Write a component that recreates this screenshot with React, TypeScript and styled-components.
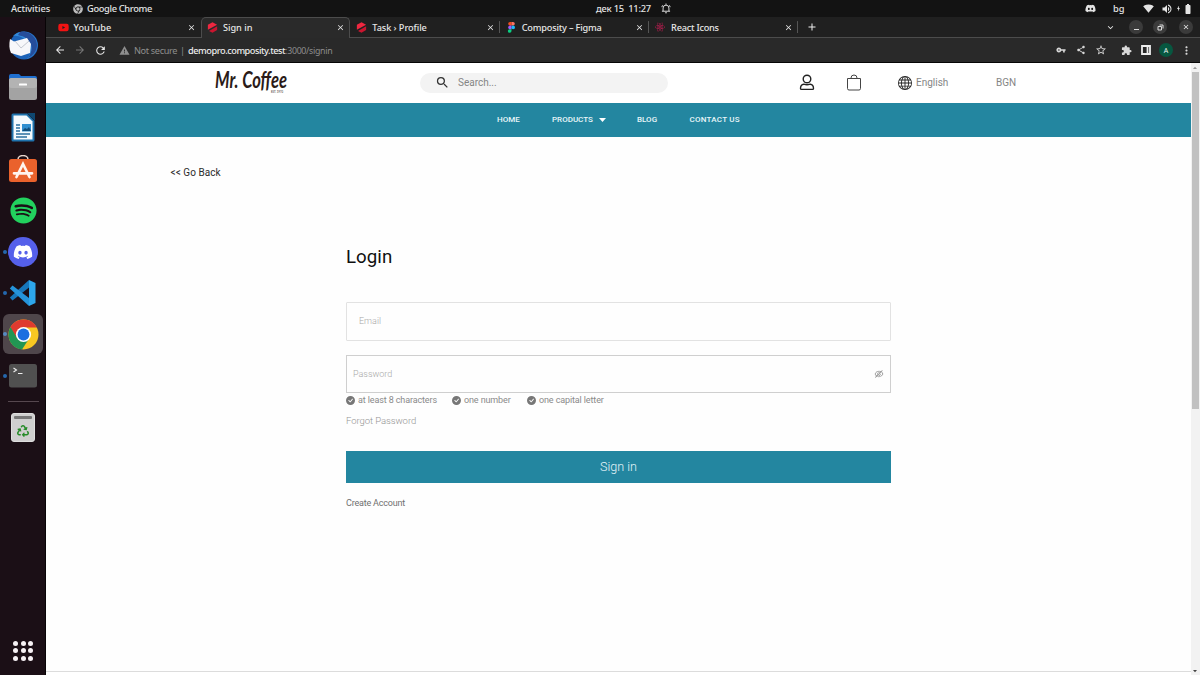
import React from "react";
import styled, { createGlobalStyle } from "styled-components";
import { FaDiscord, FaSpotify, FaYoutube, FaReact, FaRecycle, FaChrome } from "react-icons/fa";
import { AiOutlineEyeInvisible } from "react-icons/ai";
import { BsCheckCircleFill, BsGlobe } from "react-icons/bs";
import {
  MdArrowBack, MdArrowForward, MdRefresh, MdWarning, MdVpnKey, MdShare, MdStarBorder,
  MdExtension, MdMoreVert, MdClose, MdAdd, MdKeyboardArrowDown, MdVolumeUp,
  MdSignalWifi4Bar, MdBatteryFull, MdSearch, MdBolt,
} from "react-icons/md";

const TEAL = "#2386a0";

const Global = createGlobalStyle`
  * { box-sizing: border-box; }
  body { margin: 0; background: #fff; overflow: hidden; }
  svg { display: block; flex: none; }
`;

const Desktop = styled.div`
  width: 1200px;
  height: 675px;
  display: grid;
  grid-template: 17px 658px / 46px 1154px;
  font-family: "Noto Sans", "Open Sans", sans-serif;
  overflow: hidden;
`;

const TopBar = styled.header`
  grid-column: 1 / 3;
  display: grid;
  grid-template-columns: 540px 1fr 115px;
  background: #131313;
  color: #e4e4e4;
  font-size: 9.3px;
  font-weight: 500;
`;

const BarGroup = styled.div<{ $pad?: number }>`
  display: flex;
  align-items: center;
  height: 17px;
  padding-left: ${(p) => p.$pad ?? 0}px;
  white-space: pre;
`;

const Label = styled.span<{ $width?: number; $spacing?: number }>`
  flex: none;
  width: ${(p) => (p.$width ? `${p.$width}px` : "auto")};
  letter-spacing: ${(p) => p.$spacing ?? 0}px;
  white-space: pre;
`;

const Spacer = styled.span<{ $size: number }>`
  flex: none;
  width: ${(p) => p.$size}px;
`;

const Dock = styled.aside`
  background: #1b0f16;
  border-right: 1px solid #080406;
  padding-top: 7.5px;
  display: flex;
  flex-direction: column;
`;

const DockItem = styled.div<{ $running?: boolean }>`
  height: 41.3px;
  flex: none;
  display: flex;
  align-items: center;
  &::before {
    content: "";
    width: 4px;
    height: 4px;
    margin-left: 3px;
    border-radius: 50%;
    flex: none;
    background: ${(p) => (p.$running ? "#2467ad" : "transparent")};
  }
`;

const Tile = styled.div<{ $active?: boolean }>`
  width: 40px;
  height: 40px;
  margin-left: -4px;
  border-radius: 6px;
  display: flex;
  align-items: center;
  justify-content: center;
  background: ${(p) => (p.$active ? "rgba(255,255,255,.23)" : "transparent")};
`;

const DockRule = styled.hr`
  width: 31px;
  height: 1px;
  margin: 5px 0 5px 8px;
  border: 0;
  background: #56484f;
`;

const AppGrid = styled.div`
  margin: auto 0 14px 13px;
  display: grid;
  grid-template-columns: repeat(3, 5px);
  gap: 2.6px;
`;

const GridDot = styled.i`
  height: 5px;
  border-radius: 50%;
  background: #f6f1f4;
`;

const Window = styled.section`
  display: grid;
  grid-template-rows: 21px 25px 612px;
`;

const TabStrip = styled.div`
  display: flex;
  background: #202020;
  border-bottom: 1px solid #4c4c4c;
  padding-left: 5.5px;
`;

const Tab = styled.div<{ $active?: boolean; $divided?: boolean }>`
  width: 149.4px;
  height: ${(p) => (p.$active ? 21 : 20)}px;
  flex: none;
  display: grid;
  grid-template-columns: 11px 1fr 11px;
  column-gap: 5px;
  align-items: center;
  padding: ${(p) => (p.$active ? "0 2px 1px 5px" : "0 3px 0 6px")};
  color: #e6e6e6;
  font-size: 9.2px;
  font-weight: 500;
  background-color: ${(p) => (p.$active ? "#2a2a2a" : "transparent")};
  border: ${(p) => (p.$active ? "1px solid #4c4c4c" : "0")};
  border-bottom: 0;
  border-radius: 5px 5px 0 0;
  background-image: ${(p) => (p.$divided ? "linear-gradient(#555, #555)" : "none")};
  background-size: 1px 12px;
  background-position: right 4px;
  background-repeat: no-repeat;
`;

const NewTab = styled.div`
  margin-left: 8px;
  display: flex;
  align-items: center;
  color: #f0f0f0;
`;

const WindowControls = styled.div`
  margin-left: auto;
  width: 95px;
  display: flex;
  align-items: center;
  color: #e8e8e8;
`;

const Round = styled.span<{ $gap: number; $color?: string }>`
  width: 14px;
  height: 14px;
  margin-left: ${(p) => p.$gap}px;
  border-radius: 50%;
  background: ${(p) => p.$color ?? "#3b3b3b"};
  display: flex;
  align-items: center;
  justify-content: center;
  color: #f0f0f0;
  font-size: 7px;
  flex: none;
`;

const AddressBar = styled.div`
  display: flex;
  align-items: center;
  background: #292929;
  border-bottom: 1px solid #060606;
  color: #8e8e8e;
  font-size: 9.2px;
  padding-left: 8px;
`;

const Url = styled.span`
  margin-left: 3px;
  white-space: pre;
  letter-spacing: -0.3px;
  font-size: 8.8px;
  b { color: #ececec; font-weight: 500; letter-spacing: -0.46px; font-size: 9.2px; }
`;

const BarActions = styled.div`
  margin-left: auto;
  width: 144px;
  display: flex;
  align-items: center;
  color: #d8d8d8;
`;

const Viewport = styled.div`
  display: grid;
  grid-template-columns: 1144.5px 9.5px;
  background: #fefefe;
`;

const Page = styled.div`
  display: flex;
  flex-direction: column;
  border-bottom: 3px solid #fff;
  box-shadow: inset 0 -1px #dcdcdc;
  font-family: Roboto, sans-serif;
`;

const SiteHeader = styled.div`
  height: 39.5px;
  flex: none;
  display: flex;
  align-items: center;
  color: #858585;
  font-size: 10px;
  background: #fff;
`;

const Logo = styled.div`
  width: 76px;
  margin-left: 168px;
  margin-right: 130px;
`;

const Search = styled.div`
  width: 248px;
  height: 20px;
  border-radius: 10px;
  background: #f3f3f3;
  display: flex;
  align-items: center;
  padding-left: 15px;
  gap: 8px;
  margin-right: 131px;
`;

const Nav = styled.nav`
  height: 34.5px;
  flex: none;
  display: flex;
  align-items: center;
  padding-left: 451px;
  background: ${TEAL};
  color: #e9f6f9;
  font-size: 8px;
  font-weight: 500;
  letter-spacing: 0.02px;
`;

const Body = styled.main`
  display: flex;
  flex-direction: column;
`;

const GoBack = styled.a`
  margin: 30px 0 0 124.5px;
  font-size: 10px;
  line-height: 12px;
  color: #2c2c2c;
  letter-spacing: 0.05px;
`;

const Form = styled.form`
  width: 545px;
  margin: 66px 0 0 300px;
  display: flex;
  flex-direction: column;
`;

const Title = styled.h1`
  margin: 0;
  font-size: 18.7px;
  line-height: 24px;
  font-weight: 400;
  color: #101010;
  letter-spacing: 0.05px;
`;

const Field = styled.div<{ $strong?: boolean }>`
  height: ${(p) => (p.$strong ? 38 : 39)}px;
  margin-top: ${(p) => (p.$strong ? 14 : 33)}px;
  padding: 0 ${(p) => (p.$strong ? 6 : 12)}px ${(p) => (p.$strong ? 0 : 1)}px;
  border: 1px solid ${(p) => (p.$strong ? "#cfcfcf" : "#e2e2e2")};
  border-radius: ${(p) => (p.$strong ? 0 : 1)}px;
  display: flex;
  align-items: center;
  justify-content: space-between;
  font-size: 9px;
  font-weight: 300;
  color: #a8a8a8;
`;

const Rules = styled.div`
  height: 14px;
  display: flex;
  align-items: center;
  font-size: 9px;
  letter-spacing: -0.12px;
  color: #8a8a8a;
`;

const Rule = styled.span<{ $width: number }>`
  width: ${(p) => p.$width}px;
  display: flex;
  align-items: center;
  gap: 3px;
  white-space: nowrap;
  svg { color: #777; }
`;

const Forgot = styled.a`
  margin-top: 8px;
  font-size: 9.5px;
  font-weight: 300;
  line-height: 12px;
  letter-spacing: -0.06px;
  color: #949494;
`;

const Submit = styled.button`
  height: 32px;
  margin-top: 24px;
  border: 0;
  padding: 0 0 2px;
  background: ${TEAL};
  color: #e4f4f8;
  font: 300 12.6px Roboto, sans-serif;
`;

const Create = styled.a`
  margin-top: 13.5px;
  font-size: 9px;
  letter-spacing: -0.19px;
  line-height: 12px;
  color: #707070;
`;

const Scroll = styled.div`
  background: #f2f2f2;
  display: flex;
  flex-direction: column;
  align-items: center;
  justify-content: space-between;
`;

const Thumb = styled.div`
  width: 7px;
  height: 337px;
  margin: 0 0 auto;
  background: #c1c1c1;
`;

const Arrow = ({ down }: { down?: boolean }) => (
  <svg width="10" height="9" viewBox="0 0 10 9">
    <path d={down ? "M3 4h4L5 6.2z" : "M3 6h4L5 3.8z"} fill={down ? "#444" : "#999"} />
  </svg>
);

const Thunderbird = () => (
  <svg width="31" height="31" viewBox="0 0 31 31">
    <circle cx="16" cy="15.500" r="14" fill="#1d63b8" />
    <path d="M5 6C10 0 23 0 28 9c4 8-1 17-9 20 4-5 4-10 2-14C18 8 10 5 5 6z" fill="#3289d9" />
    <path d="M12 2c9-2 17 5 17 13 0 6-4 11-9 13 5-7 5-14-1-19-3-3-6-3-9-4z" fill="#254d9b" />
    <path d="M2 9l4 2.500 13-3.500 4 6-1 9-9 3-10-3c-2-4-2-9-1-14z" fill="#f7f7fa" />
    <path d="M7 11l6 7 8-7" fill="none" stroke="#c4c7d0" strokeWidth="1" />
  </svg>
);

const Files = () => (
  <svg width="28" height="27" viewBox="0 0 28 27">
    <path d="M0 3Q0 1 2 1h8l2 2h14q2 0 2 2v9H0z" fill="#1f6fd0" />
    <rect y="5" width="28" height="22" rx="2.500" fill="#a3a3a3" />
    <rect y="5" width="28" height="10" rx="2.500" fill="#b3b3b3" />
    <rect x="10" y="10.500" width="8" height="2" rx=".6" fill="#fff" />
  </svg>
);

const Writer = () => (
  <svg width="24" height="29" viewBox="0 0 24 29">
    <path d="M2 .5h14l7.500 7.500v19q0 1.500-1.500 1.500H2Q.5 28.500.5 27V2Q.5.500 2 .5z" fill="#1f73ad" />
    <path d="M2.500 2.500h13l6 6v18h-19z" fill="#f4fafd" />
    <path d="M16 0h8v8z" fill="#0e4770" />
    <path d="M5 12h4M5 15h4M5 18h4M5 21h14M5 24h11" stroke="#286f9e" strokeWidth="1.300" />
    <rect x="11" y="11" width="9" height="7.500" fill="#2f8fd0" />
    <path d="M11 18l3-3 2 1 2-2 2 4z" fill="#114e7a" />
  </svg>
);

const Software = () => (
  <svg width="28" height="29" viewBox="0 0 28 29">
    <path d="M9 6V4.500a5 4 0 0 1 10 0V6" fill="none" stroke="#e8d5cd" strokeWidth="1.500" />
    <rect y="4" width="28" height="23" rx="2.500" fill="#ea622c" />
    <path d="M7.500 22L14 9l6.500 13M5 18.300h18" fill="none" stroke="#fff4ee" strokeWidth="2.700" strokeLinecap="round" />
  </svg>
);

const Code = () => (
  <svg width="28" height="28" viewBox="0 0 28 28">
    <path d="M.8 18.500L20 1v7.500L3.500 21.500z" fill="#1777bb" />
    <path d="M.8 9.500L3.500 6.500 20 19v8z" fill="#2594db" />
    <path d="M20 1l6.500 3v20L20 27z" fill="#2da6ec" />
  </svg>
);

const Chrome = () => (
  <svg width="31" height="31" viewBox="0 0 31 31">
    <circle cx="15.500" cy="15.500" r="15" fill="#f8c722" />
    <path d="M15.500 15.500L2.500 8a15 15 0 0 0 11.500 22.500l7.500-11.500z" fill="#219653" />
    <path d="M2.500 8a15 15 0 0 1 26.300.5H15.500L9 19z" fill="#df3b2f" />
    <circle cx="15.500" cy="15.500" r="7.600" fill="#fff" />
    <circle cx="15.500" cy="15.500" r="5.900" fill="#1b6fe0" />
  </svg>
);

const Terminal = () => (
  <svg width="28" height="24" viewBox="0 0 28 24">
    <rect width="28" height="23.500" rx="2.500" fill="#505050" />
    <path d="M4.500 4l3 2-3 2M9 9.500h4.500" fill="none" stroke="#eee" strokeWidth="1.100" />
  </svg>
);

const TrashBox = styled.div`
  width: 24px;
  height: 29px;
  border-radius: 3px;
  background: #cfcfcf;
  border: 1px solid #dedede;
  display: flex;
  flex-direction: column;
  align-items: center;
  gap: 6px;
  color: #258b28;
  &::before { content: ""; width: 18px; height: 3px; margin-top: 2px; background: #777; border-radius: 1px; }
`;

const Disc = styled.div`
  width: 30px;
  height: 30px;
  border-radius: 50%;
  background: #5560ea;
  color: #fff;
  display: flex;
  align-items: center;
  justify-content: center;
`;

const Composity = () => (
  <svg width="11" height="11" viewBox="0 0 11 11">
    <path d="M5.500.2l4.600 2.600L.9 7.800V2.800z" fill="#ef2740" />
    <path d="M10.100 4.300v3.700L5.500 10.800 2 8.900z" fill="#c9152f" />
  </svg>
);

const Figma = () => (
  <svg width="11" height="11" viewBox="0 0 11 11">
    <path d="M5.500 0H4a1.800 1.800 0 0 0 0 3.600h1.500z" fill="#f24e1e" />
    <path d="M5.500 0H7a1.800 1.800 0 0 1 0 3.600H5.500z" fill="#ff7262" />
    <path d="M5.500 3.600H4a1.800 1.800 0 0 0 0 3.600h1.500z" fill="#a259ff" />
    <circle cx="7.200" cy="5.400" r="1.800" fill="#1abcfe" />
    <path d="M5.500 7.200H4A1.800 1.800 0 1 0 5.500 9z" fill="#0acf83" />
  </svg>
);

const Bell = () => (
  <svg width="10" height="11" viewBox="0 0 11 11" fill="none" stroke="#d8d8d8" strokeWidth="1.100">
    <path d="M2.300 8.300V5a3.200 3.200 0 0 1 6.400 0v3.300M1 8.500h9M4.500 10.200h2M5.500 0v1.500M.9 4l.8-2M10.100 4L9.300 2" />
  </svg>
);

const Person = () => (
  <svg width="16" height="17" viewBox="0 0 16 17" fill="none" stroke="#222" strokeWidth="1.400">
    <circle cx="8" cy="5" r="3.800" />
    <path d="M4.800 10.200c-2 .2-3.300 1.800-3.300 4.200q0 1 1 1h11q1 0 1-1c0-2.400-1.300-4-3.300-4.200q-3.200 1.200-6.400 0z" />
  </svg>
);

const Bag = () => (
  <svg width="16" height="17" viewBox="0 0 16 17" fill="none" stroke="#444" strokeWidth="1">
    <path d="M1.500 4.500h13v10q0 1.500-1.500 1.500H3q-1.500 0-1.500-1.500zM5 4.500V4a3 3 0 0 1 6 0v.5" />
  </svg>
);

const BrandMark = () => (
  <svg width="76" height="39" viewBox="0 0 76 39" fill="#2b1b18" fontFamily="Lato, sans-serif" fontStyle="italic" fontWeight="700">
    <text x="1" y="25" fontSize="22" textLength="72" lengthAdjust="spacingAndGlyphs">Mr. Coffee</text>
    <text x="57" y="30" fontSize="2.800" fontStyle="normal" fontWeight="400" textLength="12">EST. 1970</text>
  </svg>
);

const tabs = [
  { title: "YouTube", icon: <FaYoutube size={11} color="#f21313" /> },
  { title: "Sign in", icon: <Composity />, active: true },
  { title: "Task › Profile", icon: <Composity />, divided: true, spacing: -0.07 },
  { title: "Composity – Figma", icon: <Figma />, divided: true, spacing: -0.19 },
  { title: "React Icons", icon: <FaReact size={10} color="#b91d50" />, divided: true, spacing: -0.24 },
];

const dock = [
  { icon: <Thunderbird /> },
  { icon: <Files /> },
  { icon: <Writer /> },
  { icon: <Software /> },
  { icon: <FaSpotify size={27} color="#22d15e" /> },
  { icon: <Disc><FaDiscord size={20} /></Disc>, running: true },
  { icon: <Code />, running: true },
  { icon: <Chrome />, running: true, active: true },
  { icon: <Terminal />, running: true },
];

export default function App() {
  return (
    <Desktop>
      <Global />
      <TopBar>
        <BarGroup $pad={11}>
          <Label $width={62} $spacing={-0.1}>Activities</Label>
          <FaChrome size={10} color="#bcbcbc" />
          <Spacer $size={4} />
          <Label $spacing={-0.35}>Google Chrome</Label>
        </BarGroup>
        <BarGroup $pad={56}>
          <Label $width={65} $spacing={-0.22}>дек 15  11:27</Label>
          <Bell />
        </BarGroup>
        <BarGroup>
          <FaDiscord size={11} />
          <Spacer $size={17} />
          <Label $width={30}>bg</Label>
          <MdSignalWifi4Bar size={11} />
          <Spacer $size={7} />
          <MdVolumeUp size={12} />
          <Spacer $size={2} />
          <MdBolt size={7} />
          <MdBatteryFull size={12} />
        </BarGroup>
      </TopBar>

      <Dock>
        {dock.map((d, i) => (
          <DockItem key={i} $running={d.running}>
            <Tile $active={d.active}>{d.icon}</Tile>
          </DockItem>
        ))}
        <DockRule />
        <DockItem>
          <Tile><TrashBox><FaRecycle size={12} /></TrashBox></Tile>
        </DockItem>
        <AppGrid>
          {Array.from({ length: 9 }, (_, i) => <GridDot key={i} />)}
        </AppGrid>
      </Dock>

      <Window>
        <TabStrip>
          {tabs.map((t) => (
            <Tab key={t.title} $active={t.active} $divided={t.divided}>
              {t.icon}
              <Label $spacing={t.spacing}>{t.title}</Label>
              <MdClose size={9} />
            </Tab>
          ))}
          <NewTab><MdAdd size={12} /></NewTab>
          <WindowControls>
            <MdKeyboardArrowDown size={11} />
            <Round $gap={13}>
              <svg width="7" height="7"><path d="M1 5.500h5" stroke="#ddd" /></svg>
            </Round>
            <Round $gap={10}>
              <svg width="7" height="7" fill="none" stroke="#ddd"><path d="M1 2.500h3.500v3.500H1zM2.500 1h3.500v3.500" /></svg>
            </Round>
            <Round $gap={12}><MdClose size={8} /></Round>
          </WindowControls>
        </TabStrip>

        <AddressBar>
          <MdArrowBack size={12} color="#e8e8e8" />
          <Spacer $size={8} />
          <MdArrowForward size={12} color="#777" />
          <Spacer $size={8} />
          <MdRefresh size={13} color="#e8e8e8" />
          <Spacer $size={12} />
          <MdWarning size={11} />
          <Spacer $size={4} />
          <Label $width={46} $spacing={-0.36}>Not secure</Label>
          <Label>|</Label>
          <Url><b>demopro.composity.test</b>:3000/signin</Url>
          <BarActions>
            <MdVpnKey size={10} />
            <Spacer $size={10} />
            <MdShare size={10} />
            <Spacer $size={9} />
            <MdStarBorder size={12} />
            <Spacer $size={14} />
            <MdExtension size={11} />
            <Spacer $size={9} />
            <svg width="10" height="10"><path d="M1 1h8v8H1zM6.500 1v8" fill="none" stroke="#eee" strokeWidth="1.800" /></svg>
            <Round $gap={8} $color="#075740">A</Round>
            <Spacer $size={7} />
            <MdMoreVert size={13} />
          </BarActions>
        </AddressBar>

        <Viewport>
          <Page>
            <SiteHeader>
              <Logo><BrandMark /></Logo>
              <Search>
                <MdSearch size={15} color="#333" />
                <Label>Search...</Label>
              </Search>
              <Person />
              <Spacer $size={31} />
              <Bag />
              <Spacer $size={36} />
              <BsGlobe size={14} color="#222" />
              <Spacer $size={4} />
              <Label $width={80}>English</Label>
              <Label>BGN</Label>
            </SiteHeader>
            <Nav>
              <Label $width={55}>HOME</Label>
              <Label $width={47}>PRODUCTS</Label>
              <svg width="7" height="4"><path d="M0 0h7L3.500 4z" fill="#fff" /></svg>
              <Spacer $size={31} />
              <Label $width={52.5}>BLOG</Label>
              <Label $spacing={0.25}>CONTACT US</Label>
            </Nav>
            <Body>
              <GoBack>&lt;&lt; Go Back</GoBack>
              <Form>
                <Title>Login</Title>
                <Field><span>Email</span></Field>
                <Field $strong>
                  <span>Password</span>
                  <AiOutlineEyeInvisible size={10} color="#888" />
                </Field>
                <Rules>
                  <Rule $width={106}><BsCheckCircleFill size={9} />at least 8 characters</Rule>
                  <Rule $width={75}><BsCheckCircleFill size={9} />one number</Rule>
                  <Rule $width={100}><BsCheckCircleFill size={9} />one capital letter</Rule>
                </Rules>
                <Forgot>Forgot Password</Forgot>
                <Submit type="button">Sign in</Submit>
                <Create>Create Account</Create>
              </Form>
            </Body>
          </Page>
          <Scroll>
            <Arrow />
            <Thumb />
            <Arrow down />
          </Scroll>
        </Viewport>
      </Window>
    </Desktop>
  );
}
